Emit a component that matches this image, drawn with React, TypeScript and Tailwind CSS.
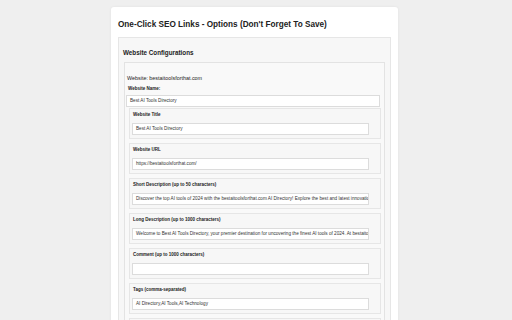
import React from "react";

const fields: { label: string; value: string }[] = [
  { label: "Website Title", value: "Best AI Tools Directory" },
  { label: "Website URL", value: "https://bestaitoolsforthat.com/" },
  {
    label: "Short Description (up to 50 characters)",
    value:
      "Discover the top AI tools of 2024 with the bestaitoolsforthat.com AI Directory! Explore the best and latest innovations",
  },
  {
    label: "Long Description (up to 1000 characters)",
    value:
      "Welcome to Best AI Tools Directory, your premier destination for uncovering the finest AI tools of 2024. At bestaitoolsforthat.com",
  },
  { label: "Comment (up to 1000 characters)", value: "" },
  { label: "Tags (comma-separated)", value: "AI Directory,AI Tools,AI Technology" },
  { label: "Category", value: "" },
];

function Field({ label, value }: { label: string; value: string }) {
  return (
    <div className="ml-[4px] w-[252px] shrink-0 border border-[#e6e6e6] bg-[#f7f7f7] pl-[2px] pt-[2px] pb-[3px]">
      <div className="h-[8px] pl-[1px] text-[4.5px] font-bold leading-[8px] text-[#222]">{label}</div>
      <div className="mt-[4px] flex h-[12px] w-[237px] items-center overflow-hidden whitespace-nowrap border border-[#dcdcdc] bg-white pl-[3px] text-[4.65px] text-[#333]">
        {value}
      </div>
    </div>
  );
}

export default function App() {
  return (
    <div
      className="h-[320px] w-[512px] overflow-hidden bg-[#efefef] pt-[7px]"
      style={{ fontFamily: '"Liberation Sans", Arial, sans-serif' }}
    >
      <div className="ml-[111px] w-[287px] rounded-[3px] bg-white px-[7px] pt-[12px] shadow-[0_0_3px_rgba(0,0,0,0.06)]">
        <h1 className="h-[12px] text-[8.2px] font-bold leading-[12px] text-[#222]">
          One-Click SEO Links - Options (Don't Forget To Save)
        </h1>
        <div className="mt-[6px] border border-[#e6e6e6] bg-[#f7f7f7] px-[3px] pt-[10px]">
          <h2 className="h-[10px] pl-[1px] text-[6.3px] font-bold leading-[10px] text-[#222]">
            Website Configurations
          </h2>
          <div className="mx-[2px] mt-[4px] border border-[#e3e3e3] bg-[#f9f9f9] pt-[11px]">
            <div className="h-[8px] pl-[2px] text-[5.4px] leading-[8px] text-[#222]">
              Website: bestaitoolsforthat.com
            </div>
            <div className="mt-[3px] h-[8px] pl-[3px] text-[4.5px] font-bold leading-[8px] text-[#222]">
              Website Name:
            </div>
            <div className="ml-[1px] mt-[2px] flex h-[12px] w-[254px] items-center overflow-hidden whitespace-nowrap border border-[#dcdcdc] bg-white pl-[3px] text-[4.65px] text-[#333]">
              Best AI Tools Directory
            </div>
            <div className="mt-[1px] flex flex-col gap-[4px]">
              {fields.map((f) => (
                <Field key={f.label} label={f.label} value={f.value} />
              ))}
            </div>
          </div>
        </div>
      </div>
    </div>
  );
}
